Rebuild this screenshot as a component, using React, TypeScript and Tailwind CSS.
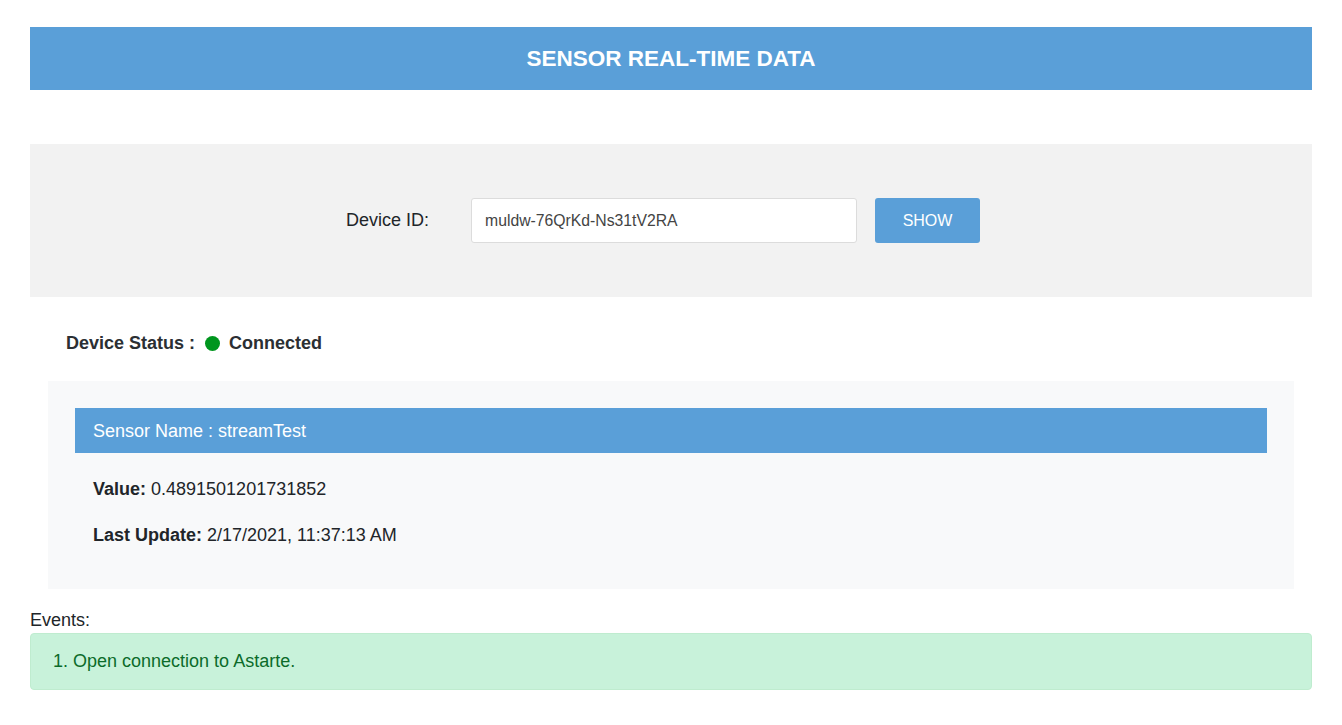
import React, { useState } from 'react';

const App = () => {
  const [deviceId, setDeviceId] = useState('muldw-76QrKd-Ns31tV2RA');

  return (
    <div className="min-h-screen bg-white px-[30px] pt-[27px] text-[#212529]" style={{ fontFamily: '"Liberation Sans", Arial, sans-serif' }}>
      {/* Header */}
      <div className="flex h-[63px] items-center justify-center bg-[#5a9fd8]">
        <h1 className="text-[22.5px] font-bold text-white">SENSOR REAL-TIME DATA</h1>
      </div>

      {/* Device form */}
      <div className="mt-[54px] flex h-[153px] items-center justify-center bg-[#f2f2f2] pr-[16px]">
        <label className="mr-[42px] text-[18px] text-[#212529]">Device ID:</label>
        <input
          value={deviceId}
          onChange={(e) => setDeviceId(e.target.value)}
          className="h-[45px] w-[386px] rounded-[3px] border border-[#dcdcdc] bg-white px-[13px] text-[15.75px] text-[#444] outline-none"
        />
        <button className="ml-[18px] h-[45px] w-[105px] rounded-[3px] bg-[#5a9fd8] text-[16px] text-white">SHOW</button>
      </div>

      {/* Status */}
      <div className="flex h-[84px] items-center pl-[36px] pt-[8px] text-[18px] font-bold text-[#2b2f33]">
        <span>Device Status :</span>
        <span className="ml-[10px] mr-[9px] inline-block h-[15px] w-[15px] rounded-full bg-[#00961e]" />
        <span>Connected</span>
      </div>

      {/* Sensor card */}
      <div className="mx-[18px] bg-[#f8f9fa] px-[27px] pb-[41px] pt-[27px]">
        <div className="flex h-[45px] items-center bg-[#5a9fd8] px-[18px] pt-[2px] text-[18px] text-white">
          Sensor Name : streamTest
        </div>
        <div className="px-[18px] text-[18px] leading-[25px]">
          <p className="mt-[24px]"><span className="font-bold">Value:</span> 0.4891501201731852</p>
          <p className="mt-[21px]"><span className="font-bold">Last Update:</span> 2/17/2021, 11:37:13 AM</p>
        </div>
      </div>

      {/* Events */}
      <div className="mt-[19px] text-[18px] leading-[25px]">Events:</div>
      <div className="flex h-[57px] items-center rounded-[4px] border border-[#bfeccf] bg-[#c8f2da] pl-[22px] text-[18px] text-[#0c6b2a]">
        1. Open connection to Astarte.
      </div>
    </div>
  );
};

export default App;
